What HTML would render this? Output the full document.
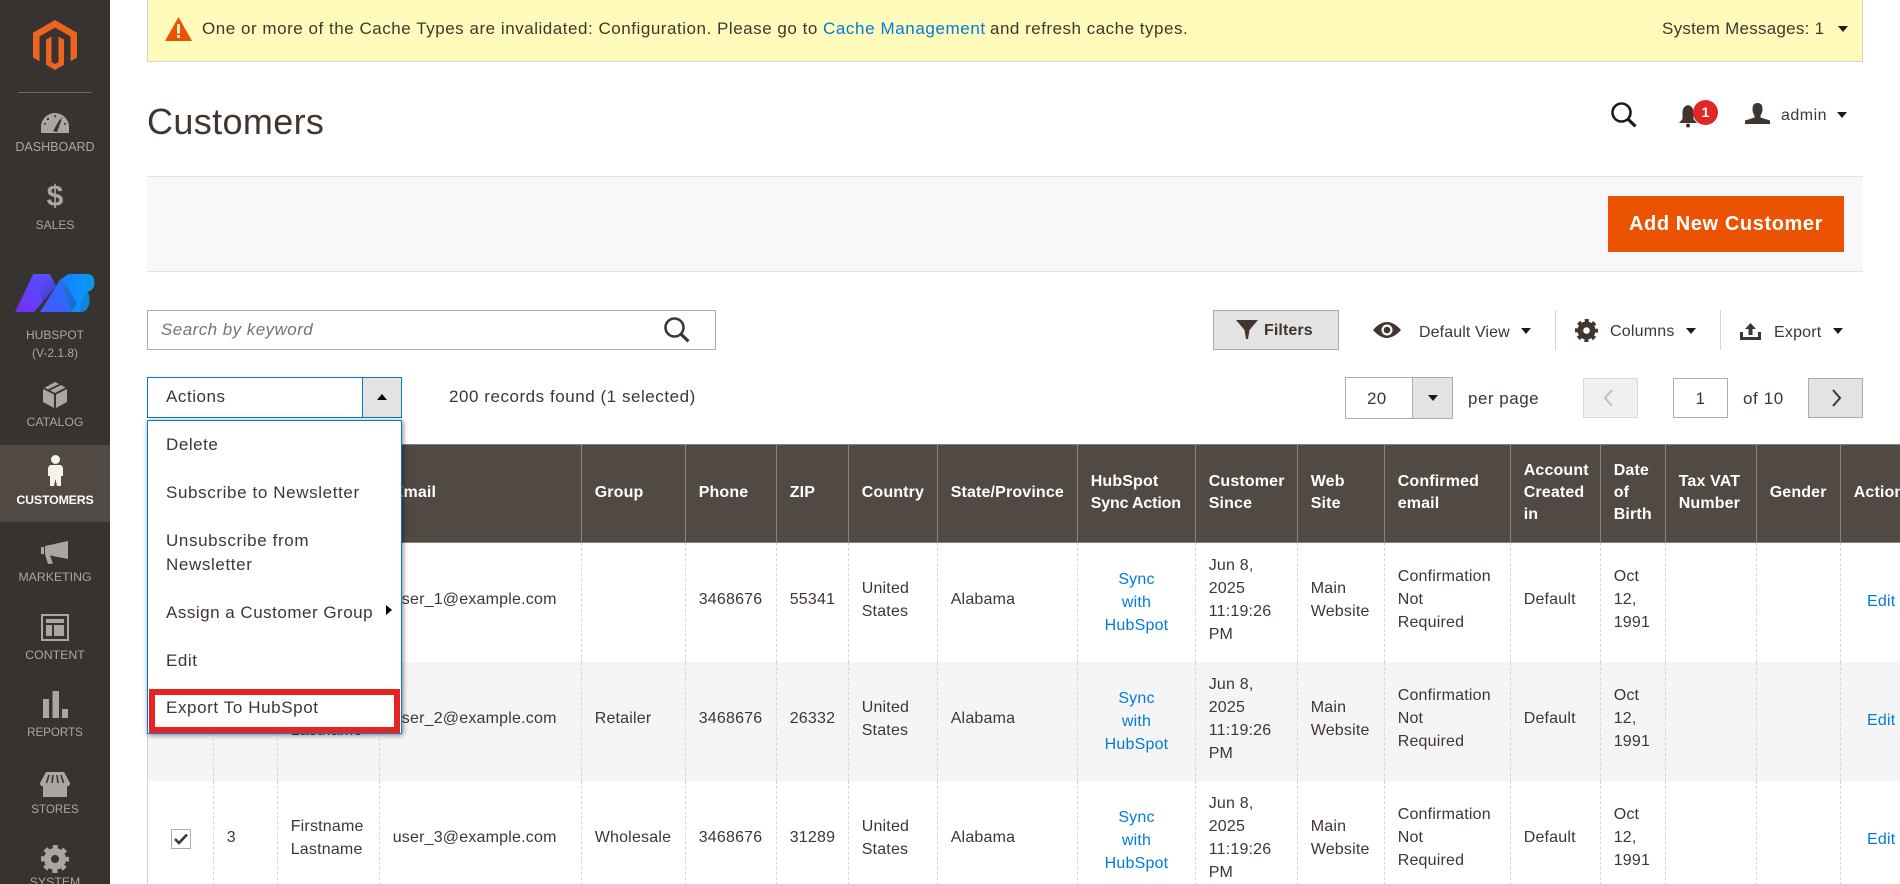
<!DOCTYPE html>
<html lang="en"><head><meta charset="utf-8"><title>Customers</title>
<style>
html,body{margin:0;padding:0;width:1900px;height:884px;overflow:hidden;background:#fff}
body{position:relative;font-family:"Liberation Sans",Arial,sans-serif;color:#41362f;font-size:17px}
.a{position:absolute;white-space:nowrap}
.t{letter-spacing:.55px;line-height:24px}
svg{position:absolute;display:block;overflow:visible}
a{color:#007bdb;text-decoration:none}
#side{position:absolute;left:0;top:0;width:110px;height:884px;background:#373330;overflow:hidden}
#side .l{position:absolute;left:0;width:110px;text-align:center;font-size:12.3px;line-height:18px;color:#aaa6a0}
#active{position:absolute;left:0;top:445px;width:110px;height:77px;background:#514943}
.caret{position:absolute;width:0;height:0;border-left:5px solid transparent;border-right:5px solid transparent;border-top:6px solid #1f1a17}
#tbl{position:absolute;left:147px;top:444px;border-collapse:separate;border-spacing:0;table-layout:fixed;width:1813px;font-size:16px;line-height:22.8px;letter-spacing:.2px}
#tbl th{background:#514943;color:#fff;font-weight:bold;text-align:left;border-left:1px solid #8a837f;border-top:1px solid #8a837f;border-bottom:1px solid #8a837f;padding:0 5px 2px 12.7px;height:95px;box-sizing:content-box;vertical-align:middle;letter-spacing:.15px;line-height:22px}
#tbl th span{letter-spacing:-.15px}
#tbl td{border-left:1px dashed #d6d6d6;padding:0 5px 4px 12.7px;height:115px;vertical-align:middle;color:#41362f}
#tbl td:first-child{border-left:1px solid #d6d6d6}
#tbl tr.alt td{background:#f5f5f5}
#tbl td.sync{text-align:center;padding:2px 13px 0;height:117px;color:#007bdb}
#tbl td.edit{padding:2px 0 2px 26px;height:115px}
#tbl td.dt{padding-bottom:3px;height:116px}
.cb{display:block;width:18px;height:18px;border:1px solid #adadad;background:#fff;margin:0 0 -1px 10px;position:relative}
#menu{position:absolute;left:147px;top:420px;width:253px;height:312px;background:#fff;border:1px solid #007bdb;box-shadow:1px 1px 5px rgba(0,0,0,.5)}
</style></head><body>

<div id="side">
  <svg style="left:0;top:0" width="110" height="110" viewBox="0 0 110 110">
    <path fill="#eb6420" d="M55 20L77 32.7V57.5L70.5 61.3V36.5L55 27.6 39.5 36.5V61.3L33 57.5V32.7Z"/>
    <path fill="#eb6420" d="M58.5 36.5V62L55 64 51.5 62V36.5L46 39.6V64.7L55 70 64 64.7V39.6Z"/>
    <rect x="18" y="92" width="74" height="1" fill="#6f6863"/>
  </svg>
  <svg style="left:41px;top:113px" width="28" height="20" viewBox="0 0 28 20">
    <path fill="#aaa6a0" d="M0 20V14A14 14 0 0 1 28 14V20Z"/>
    <path fill="#373330" d="M12 18L19 6 20.5 7 16 19Z"/>
    <g fill="#373330"><rect x="13.4" y="2" width="1.4" height="2.5"/><rect x="6" y="5" width="2" height="2"/><rect x="20" y="5" width="1" height="1"/><rect x="3" y="10" width="2" height="1.5"/><rect x="23" y="10" width="2" height="1.5"/></g>
  </svg>
  <div class="l" style="top:137.500px;font-size:12.5px">DASHBOARD</div>
  <div class="a" style="left:0;width:110px;text-align:center;top:180px;font-size:30px;font-weight:bold;line-height:34px;color:#aaa6a0">$</div>
  <div class="l" style="top:215.500px;font-size:12px">SALES</div>
  <svg style="left:0;top:260px" width="110" height="60" viewBox="0 0 330 180">
    <defs>
      <linearGradient id="g1" x1="0" y1="1" x2="1" y2="0"><stop offset="0" stop-color="#7a2cf2"/><stop offset=".6" stop-color="#5a48ff"/><stop offset="1" stop-color="#5a56ff"/></linearGradient>
      <linearGradient id="g1b" x1="0" y1="0" x2="1" y2="1"><stop offset="0" stop-color="#5a4cff" stop-opacity="0"/><stop offset="1" stop-color="#2b2a80" stop-opacity=".75"/></linearGradient>
      <linearGradient id="g2" x1="0" y1="1" x2="1" y2="0"><stop offset="0" stop-color="#4a55ff"/><stop offset="1" stop-color="#1f74ff"/></linearGradient>
      <linearGradient id="g2b" x1="0" y1="0" x2="1" y2="1"><stop offset="0" stop-color="#2d6dd8"/><stop offset="1" stop-color="#0f6ecf"/></linearGradient>
      <linearGradient id="g3" x1="0" y1="0" x2="1" y2="0"><stop offset="0" stop-color="#177bff"/><stop offset="1" stop-color="#03a2f8"/></linearGradient>
    </defs>
    <path fill="url(#g1)" d="M45 156L100 42H150L168 78 125 130 102 156Z"/>
    <path fill="url(#g1b)" d="M108 42H150L168 78 127 128Z"/>
    <path fill="url(#g2)" d="M120 156L180 59 212 156Z"/>
    <path fill="url(#g3)" d="M180 59L205 42H262Q283 42 283 70 283 90 262 96 270 106 268 126 264 156 240 156H210Z"/>
    <path fill="url(#g2b)" d="M180 59L212 156 232 132 200 78Z"/>
    <path fill="#1278c8" d="M262 96Q270 106 268 126 264 150 240 156 238 122 262 96Z" opacity=".55"/>
    <path fill="#1a8ad8" d="M262 42Q283 42 283 70 283 90 262 96 254 70 262 42Z" opacity=".45"/>
  </svg>
  <div class="l" style="top:326px;font-size:12px">HUBSPOT</div>
  <div class="l" style="top:344px;font-size:12px">(V-2.1.8)</div>
  <svg style="left:43px;top:382px" width="24" height="26" viewBox="0 0 24 26" fill="#aaa6a0">
    <path d="M0 7L11 12.5V26L0 20Z"/><path d="M24 7L13 12.5V26L24 20Z"/>
    <path d="M12 0L16 2 5 7.5 1.5 5.8Z"/><path d="M18 3L22.5 5.5 12 11 7 8.5Z"/>
  </svg>
  <div class="l" style="top:412.500px">CATALOG</div>
  <div id="active"></div>
  <svg style="left:48px;top:455px" width="15" height="31" viewBox="0 0 15 31" fill="#f7f3eb">
    <circle cx="7.5" cy="4.5" r="4.5"/>
    <path d="M2.5 10H12.5Q15 11 15 14V21H13V31H9L7.5 24 6 31H2V21H0V14Q0 11 2.5 10Z"/>
  </svg>
  <div class="l" style="top:490.500px;color:#fff;font-weight:bold;font-size:12.4px;letter-spacing:-.2px">CUSTOMERS</div>
  <svg style="left:41px;top:541px" width="27" height="23" viewBox="0 0 27 23" fill="#aaa6a0">
    <path d="M27 0V18L9 14.5 12 22.5 7 23 4 13V5Z"/><rect x="0" y="6" width="3" height="7"/>
  </svg>
  <div class="l" style="top:567.500px">MARKETING</div>
  <svg style="left:41px;top:614px" width="28" height="27" viewBox="0 0 28 27" fill="#aaa6a0">
    <path fill-rule="evenodd" d="M0 0H28V27H0ZM2 2V25H26V2Z"/>
    <rect x="5" y="5" width="18" height="4"/><rect x="5" y="11" width="6" height="11"/><rect x="13" y="11" width="10" height="11"/>
  </svg>
  <div class="l" style="top:645.500px">CONTENT</div>
  <svg style="left:43px;top:691px" width="25" height="27" viewBox="0 0 25 27" fill="#aaa6a0">
    <rect x="0" y="8" width="6" height="19"/><rect x="9.5" y="0" width="6.5" height="27"/><rect x="19" y="18" width="6" height="9"/>
  </svg>
  <div class="l" style="top:723.500px;font-size:11.6px">REPORTS</div>
  <svg style="left:40px;top:772px" width="30" height="25" viewBox="0 0 30 25" fill="#aaa6a0">
    <path d="M6 0H24L30 11Q30 14 27 14.5V25H3V14.5Q0 14 0 11Z"/>
    <path stroke="#373330" stroke-width="1.6" fill="none" d="M9 3L6.5 11M13 3L12 11M17 3L18 11M21 3L23.5 11"/>
  </svg>
  <div class="l" style="top:800.500px;font-size:11.6px">STORES</div>
  <svg style="left:41px;top:845px" width="28" height="28" viewBox="-14 -14 28 28" fill="none" stroke="#aaa6a0">
    <circle r="7.5" stroke-width="7"/>
    <circle r="12" stroke-width="4" stroke-dasharray="5 4.42" stroke-dashoffset="2.5"/>
  </svg>
  <div class="l" style="top:873px">SYSTEM</div>
</div>

<!-- system message -->
<div class="a" style="left:147px;top:-1px;width:1714px;height:62px;background:#fffbbb;border:1px solid #d4d4c4;border-top:0"></div>
<svg style="left:165px;top:17px" width="27" height="24" viewBox="0 0 27 24">
  <path fill="#eb5202" d="M13.5 0L27 24H0Z"/><rect x="12.1" y="7" width="2.8" height="9.5" fill="#fff8d0"/><rect x="12.1" y="18" width="2.8" height="3" fill="#fff8d0"/>
</svg>
<div class="a t" style="left:202px;top:17px;letter-spacing:.53px">One or more of the Cache Types are invalidated: Configuration. Please go to</div>
<a class="a t" style="left:823px;top:17px;letter-spacing:.6px">Cache Management</a>
<div class="a t" style="left:990px;top:17px;letter-spacing:.5px">and refresh cache types.</div>
<div class="a t" style="left:1662px;top:17px;letter-spacing:.25px">System Messages: 1</div>
<div class="caret" style="left:1838px;top:26px"></div>

<!-- header -->
<div class="a" style="left:147px;top:100px;font-size:36px;line-height:44px;letter-spacing:.36px;color:#41362f">Customers</div>
<svg style="left:1611px;top:102px" width="26" height="25" viewBox="0 0 26 25" fill="none" stroke="#1f1a17" stroke-width="2.6"><circle cx="10.5" cy="10.5" r="9"/><path stroke-width="3.2" d="M16.8 17L24.5 24.4"/></svg>
<svg style="left:1678px;top:104px" width="20" height="24" viewBox="0 0 20 24" fill="#41362f"><path d="M10 1Q15 2 15.5 8V15L19 19H1L4.5 15V8Q5 2 10 1Z"/><circle cx="10" cy="21.5" r="2"/></svg>
<div class="a" style="left:1693px;top:100px;width:25px;height:25px;border-radius:50%;background:#e22626;color:#fff;font-weight:bold;font-size:14px;line-height:25px;text-align:center">1</div>
<svg style="left:1745px;top:103px" width="25" height="21" viewBox="0 0 25 21" fill="#41362f"><path d="M12.5 0Q17.5 0 17.5 6 17.5 10 15.5 12.5V14.5L25 17.5V21H0V17.5L9.5 14.5V12.5Q7.5 10 7.5 6 7.5 0 12.5 0Z"/></svg>
<div class="a t" style="left:1781px;top:104px;font-size:16px;letter-spacing:.5px">admin</div>
<div class="caret" style="left:1837px;top:112px"></div>

<!-- action bar -->
<div class="a" style="left:147px;top:176px;width:1716px;height:94px;background:#f8f8f8;border-top:1px solid #e3e3e3;border-bottom:1px solid #e3e3e3"></div>
<div class="a" style="left:1608px;top:196px;width:236px;height:56px;background:#eb5202;color:#fff;font-weight:bold;font-size:20px;line-height:56px;text-align:center;letter-spacing:.6px">Add New Customer</div>

<!-- search -->
<div class="a" style="left:147px;top:310px;width:567px;height:38px;border:1px solid #adadad;background:#fff"></div>
<div class="a t" style="left:161px;top:318px;font-style:italic;color:#7b736d;letter-spacing:.45px">Search by keyword</div>
<svg style="left:664px;top:317px" width="26" height="25" viewBox="0 0 26 25" fill="none" stroke="#41362f" stroke-width="2.6"><circle cx="10.5" cy="10.5" r="9"/><path stroke-width="3.2" d="M16.8 17L24.5 24.4"/></svg>

<!-- filters -->
<div class="a" style="left:1213px;top:310px;width:124px;height:38px;background:#e3e3e3;border:1px solid #adadad"></div>
<svg style="left:1236px;top:320px" width="22" height="19" viewBox="0 0 22 19" fill="#41362f"><path d="M0 0H22L13.5 10 12 19H10L8.500 10Z"/></svg>
<div class="a" style="left:1264px;top:320px;font-size:16px;font-weight:bold;line-height:22px;letter-spacing:.1px">Filters</div>
<svg style="left:1373px;top:322px" width="28" height="16" viewBox="0 0 28 16"><path fill="#41362f" d="M0 8Q14-8 28 8 14 24 0 8Z"/><circle cx="14" cy="8" r="5.5" fill="#fff"/><circle cx="14" cy="8" r="3.3" fill="#41362f"/></svg>
<div class="a t" style="left:1419px;top:321px;font-size:16px;letter-spacing:.1px">Default View</div>
<div class="caret" style="left:1521px;top:328px"></div>
<div class="a" style="left:1555px;top:310px;width:1px;height:40px;background:#d6d6d6"></div>
<svg style="left:1575px;top:319px" width="23" height="23" viewBox="-14 -14 28 28" fill="none" stroke="#41362f"><circle r="7.5" stroke-width="7"/><circle r="12" stroke-width="4" stroke-dasharray="5 4.42" stroke-dashoffset="2.5"/></svg>
<div class="a t" style="left:1610px;top:320px;font-size:16px;letter-spacing:.2px">Columns</div>
<div class="caret" style="left:1686px;top:328px"></div>
<div class="a" style="left:1720px;top:310px;width:1px;height:40px;background:#d6d6d6"></div>
<svg style="left:1740px;top:323px" width="21" height="17" viewBox="0 0 21 17" fill="#41362f"><path d="M0 9V17H21V9H18V14H3V9Z"/><path d="M10.5 0L16 6H12.5V12H8.5V6H5Z"/></svg>
<div class="a t" style="left:1774px;top:321px;font-size:16px;letter-spacing:.2px">Export</div>
<div class="caret" style="left:1833px;top:328px"></div>

<!-- actions -->
<div class="a" style="left:147px;top:377px;width:253px;height:39px;border:1px solid #007bdb;background:#fff"></div>
<div class="a" style="left:362px;top:378px;width:38px;height:39px;border-left:1px solid #007bdb;background:#e3e3e3"></div>
<div class="a" style="left:377px;top:394px;width:0;height:0;border-left:5px solid transparent;border-right:5px solid transparent;border-bottom:6px solid #000"></div>
<div class="a t" style="left:166px;top:385px">Actions</div>
<div class="a t" style="left:449px;top:385px;letter-spacing:.54px">200 records found (1 selected)</div>

<!-- pager -->
<div class="a" style="left:1345px;top:377px;width:106px;height:40px;border:1px solid #adadad;background:#fff"></div>
<div class="a" style="left:1412px;top:378px;width:39px;height:40px;border-left:1px solid #adadad;background:#e3e3e3"></div>
<div class="a t" style="left:1367px;top:386.500px;letter-spacing:.3px">20</div>
<div class="caret" style="left:1428px;top:395px"></div>
<div class="a t" style="left:1468px;top:386.500px;letter-spacing:.5px">per page</div>
<div class="a" style="left:1583px;top:378px;width:53px;height:38px;background:#f0f0f0;border:1px solid #d9d9d9"></div>
<svg style="left:1603px;top:388px" width="12" height="20" viewBox="0 0 12 20" fill="none" stroke="#c2bebb" stroke-width="2"><path d="M9 2L2 10 9 18"/></svg>
<div class="a" style="left:1673px;top:378px;width:53px;height:38px;background:#fff;border:1px solid #adadad"></div>
<div class="a t" style="left:1673px;top:386.500px;width:55px;text-align:center">1</div>
<div class="a t" style="left:1743px;top:386.500px;letter-spacing:.6px">of 10</div>
<div class="a" style="left:1808px;top:378px;width:53px;height:38px;background:#e3e3e3;border:1px solid #adadad"></div>
<svg style="left:1830px;top:388px" width="12" height="20" viewBox="0 0 12 20" fill="none" stroke="#41362f" stroke-width="2"><path d="M3 2L10 10 3 18"/></svg>

<!-- table -->
<table id="tbl">
<colgroup><col style="width:66px"><col style="width:64px"><col style="width:102px"><col style="width:202px"><col style="width:104px"><col style="width:91px"><col style="width:72px"><col style="width:89px"><col style="width:140px"><col style="width:118px"><col style="width:102px"><col style="width:87px"><col style="width:126px"><col style="width:90px"><col style="width:65px"><col style="width:91px"><col style="width:84px"><col style="width:120px"></colgroup>
<thead><tr><th></th><th>ID</th><th>Name</th><th>Email</th><th>Group</th><th>Phone</th><th>ZIP</th><th>Country</th><th>State/Province</th><th>HubSpot<br><span>Sync Action</span></th><th>Customer<br>Since</th><th>Web<br>Site</th><th>Confirmed<br>email</th><th>Account<br>Created<br>in</th><th>Date<br>of<br>Birth</th><th>Tax VAT<br>Number</th><th>Gender</th><th>Action</th></tr></thead>
<tbody>
<tr><td></td><td>1</td><td>Firstname<br>Lastname</td><td>user_1@example.com</td><td></td><td>3468676</td><td>55341</td><td>United<br>States</td><td>Alabama</td><td class="sync">Sync<br>with<br>HubSpot</td><td class="dt">Jun 8,<br>2025<br>11:19:26<br>PM</td><td>Main<br>Website</td><td>Confirmation<br>Not<br>Required</td><td>Default</td><td>Oct<br>12,<br>1991</td><td></td><td></td><td class="edit"><a>Edit</a></td></tr>
<tr class="alt"><td></td><td>2</td><td>Firstname<br>Lastname</td><td>user_2@example.com</td><td>Retailer</td><td>3468676</td><td>26332</td><td>United<br>States</td><td>Alabama</td><td class="sync">Sync<br>with<br>HubSpot</td><td class="dt">Jun 8,<br>2025<br>11:19:26<br>PM</td><td>Main<br>Website</td><td>Confirmation<br>Not<br>Required</td><td>Default</td><td>Oct<br>12,<br>1991</td><td></td><td></td><td class="edit"><a>Edit</a></td></tr>
<tr><td><span class="cb"><svg style="left:2px;top:3px" width="14" height="12" viewBox="0 0 14 12" fill="none" stroke="#41362f" stroke-width="2.6"><path d="M1 6L5 10 13 1.5"/></svg></span></td><td>3</td><td>Firstname<br>Lastname</td><td>user_3@example.com</td><td>Wholesale</td><td>3468676</td><td>31289</td><td>United<br>States</td><td>Alabama</td><td class="sync">Sync<br>with<br>HubSpot</td><td class="dt">Jun 8,<br>2025<br>11:19:26<br>PM</td><td>Main<br>Website</td><td>Confirmation<br>Not<br>Required</td><td>Default</td><td>Oct<br>12,<br>1991</td><td></td><td></td><td class="edit"><a>Edit</a></td></tr>
</tbody></table>

<!-- dropdown -->
<div id="menu"></div>
<div class="a t" style="left:166px;top:433px">Delete</div>
<div class="a t" style="left:166px;top:481px;letter-spacing:.62px">Subscribe to Newsletter</div>
<div class="a t" style="left:166px;top:529px;letter-spacing:.62px">Unsubscribe from</div>
<div class="a t" style="left:166px;top:553px;letter-spacing:.62px">Newsletter</div>
<div class="a t" style="left:166px;top:601px;letter-spacing:.5px">Assign a Customer Group</div>
<div class="a" style="left:386px;top:605px;width:0;height:0;border-top:5px solid transparent;border-bottom:5px solid transparent;border-left:6px solid #000"></div>
<div class="a t" style="left:166px;top:649px">Edit</div>
<div class="a" style="left:149px;top:689px;width:239px;height:32px;border:6px solid #e82121;background:#fff"></div>
<div class="a t" style="left:166px;top:696px;letter-spacing:.6px">Export To HubSpot</div>
</body></html>
